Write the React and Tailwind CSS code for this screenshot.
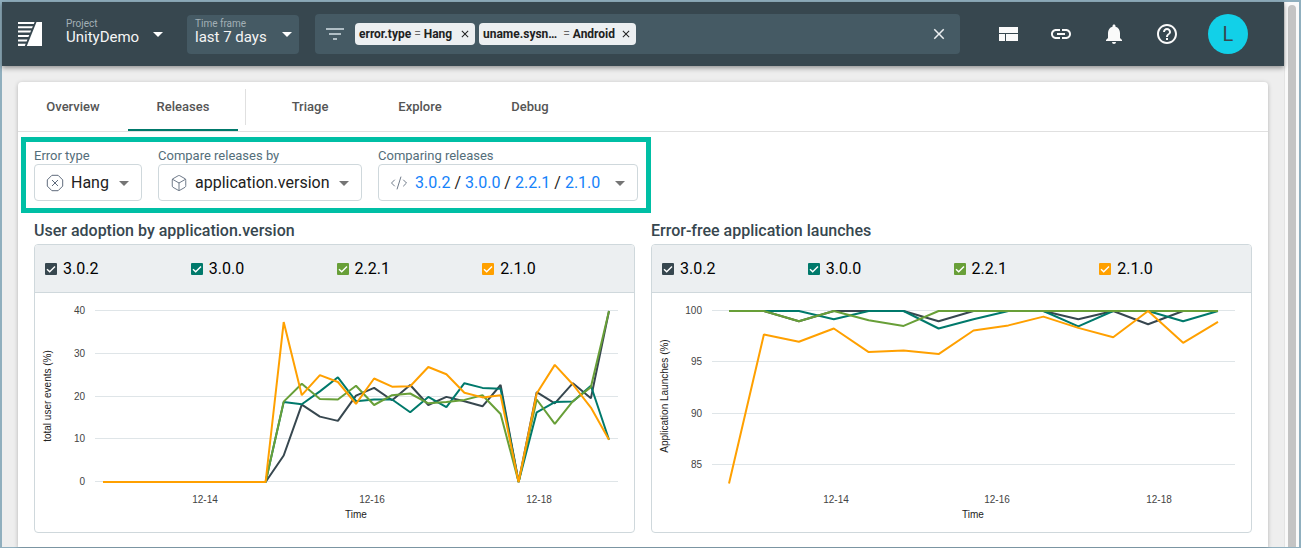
import { Box, CodeXml } from 'lucide-react';
import {
  MdArrowDropDown,
  MdClose,
  MdFilterList,
  MdHelpOutline,
  MdLink,
  MdNotifications,
} from 'react-icons/md';

const RELEASES = [
  { name: '3.0.2', color: '#37474f', box: 'bg-[#37474f]' },
  { name: '3.0.0', color: '#00796b', box: 'bg-[#00796b]' },
  { name: '2.2.1', color: '#689f38', box: 'bg-[#689f38]' },
  { name: '2.1.0', color: '#ffa000', box: 'bg-[#ffa000]' },
];

const QUIET = [0, 0, 0, 0, 0, 0, 0, 0, 0, 0];

const ADOPTION = {
  yTitle: 'total user events (%)',
  axis: [60, 583],
  domain: [0, 40],
  range: [189, 18],
  x: [68, 574],
  ticks: [0, 10, 20, 30, 40],
  dates: [['12-14', 170], ['12-16', 337], ['12-18', 504]],
  series: [
    [...QUIET, 6.2, 18.1, 15.3, 14.3, 20.2, 22, 19.1, 22.7, 18, 19.9, 18.9, 17.7, 22.7, 0, 21, 18.4, 23.1, 19.6, 40],
    [...QUIET, 18.7, 18.2, 21.2, 24.5, 18.9, 19.3, 19.3, 16.3, 19.9, 17.5, 23.1, 22, 21.8, 0, 16.3, 18.7, 18.8, 22.5, 9.9],
    [...QUIET, 18.8, 23, 19.4, 19.3, 22.5, 18, 20.3, 20.7, 18.4, 18.7, 19.2, 20.3, 15.9, 0, 19.3, 13.6, 18.9, 22.2, 40],
    [...QUIET, 37.4, 20.3, 25, 23.4, 18.3, 24.2, 22.3, 22.4, 26.9, 25.2, 20.9, 19.8, 20.3, 0, 20.7, 27.4, 22.8, 17.4, 9.9],
  ],
};

const LAUNCHES = {
  yTitle: 'Application Launches (%)',
  axis: [60, 583],
  domain: [85, 100],
  range: [172, 18],
  x: [77, 566],
  ticks: [85, 90, 95, 100],
  dates: [['12-14', 184], ['12-16', 345], ['12-18', 507]],
  series: [
    [100, 100, 99, 100, 100, 100, 99, 100, 100, 100, 99.2, 100, 98.7, 100, 100],
    [100, 100, 100, 99.2, 100, 100, 98.3, 99.2, 100, 100, 98.5, 100, 100, 99, 100],
    [100, 100, 99, 100, 99.1, 98.55, 100, 100, 100, 100, 100, 100, 100, 100, 100],
    [83.2, 97.7, 97, 98.3, 96, 96.15, 95.8, 98.1, 98.6, 99.45, 98.35, 97.45, 100, 96.9, 98.95],
  ],
};

function LineChart({ chart, label }) {
  const { domain, range, x, axis, ticks, dates, series } = chart;
  const yAt = (v) => range[0] + ((v - domain[0]) / (domain[1] - domain[0])) * (range[1] - range[0]);
  const toPoints = (values) =>
    values
      .map((v, i) => `${(x[0] + (i * (x[1] - x[0])) / (values.length - 1)).toFixed(1)},${yAt(v).toFixed(1)}`)
      .join(' ');
  return (
    <svg
      viewBox="0 0 599 239"
      role="img"
      aria-label={label}
      className="block h-auto w-full font-['Liberation_Sans',Arial,sans-serif] text-[10px]"
    >
      {ticks.map((t) => (
        <g key={t}>
          <line x1={axis[0]} x2={axis[1]} y1={Math.round(yAt(t)) - 0.5} y2={Math.round(yAt(t)) - 0.5} stroke="#dfe5e8" />
          <text x="50" y={Math.round(yAt(t)) + 3} textAnchor="end" fill="#444">{t}</text>
        </g>
      ))}
      {series.map((values, i) => (
        <polyline
          key={RELEASES[i].name}
          points={toPoints(values)}
          fill="none"
          stroke={RELEASES[i].color}
          strokeWidth="2"
          strokeLinejoin="bevel"
        />
      ))}
      {dates.map(([d, cx]) => (
        <text key={d} x={cx} y="210" textAnchor="middle" fill="#444">{d}</text>
      ))}
      <text x="321" y="225" textAnchor="middle" fill="#222">Time</text>
      <text transform="translate(16 103) rotate(-90)" textAnchor="middle" fill="#222">
        {chart.yTitle}
      </text>
    </svg>
  );
}

function ChartPanel({ title, chart, id }) {
  return (
    <section className="min-w-0">
      <h2 className="mb-[3px] text-base leading-5 font-medium text-[#37474f]">{title}</h2>
      <div className="overflow-hidden rounded-sm border border-[#cfd8dc]">
        <div className="grid h-12 grid-cols-4 items-center border-b border-[#cfd8dc] bg-[#eceff1] pr-[6px] pl-[10px]">
          {RELEASES.map((r) => (
            <label key={r.name} htmlFor={`${id}-${r.name}`} className="flex items-center gap-[6px] text-base text-black">
              <span className="grid size-3 [&>*]:col-start-1 [&>*]:row-start-1">
                <input
                  id={`${id}-${r.name}`}
                  type="checkbox"
                  defaultChecked
                  className={`peer size-3 appearance-none rounded-[1px] ${r.box}`}
                />
                <svg viewBox="0 0 12 12" className="pointer-events-none invisible size-3 peer-checked:visible">
                  <path d="M2 6.2 4.7 8.8 10 3.4" fill="none" stroke="#fff" strokeWidth="1.4" />
                </svg>
              </span>
              {r.name}
            </label>
          ))}
        </div>
        <LineChart chart={chart} label={title} />
      </div>
    </section>
  );
}

function HeaderSelect({ id, label, value, box }) {
  return (
    <div className={`grid h-[39px] w-28 [&>*]:col-start-1 [&>*]:row-start-1 ${box}`}>
      <label htmlFor={id} className="px-2 pt-[2px] text-[10px] leading-[13px] text-[#a3b0b6]">{label}</label>
      <select
        id={id}
        className="h-full w-full appearance-none bg-transparent px-2 pt-[6px] text-[15px] leading-4 text-[#f5f5f5] outline-none"
      >
        <option>{value}</option>
      </select>
      <MdArrowDropDown className="pointer-events-none size-6 self-center justify-self-end text-white" />
    </div>
  );
}

function HangIcon({ className }) {
  return (
    <svg viewBox="0 0 18 18" className={className} fill="none" stroke="currentColor">
      <path d="M5.9 1.3H12.1L16.7 5.9V12.1L12.1 16.7H5.9L1.3 12.1V5.9Z" strokeLinejoin="round" />
      <path d="M6 6 12 12M12 6 6 12" />
    </svg>
  );
}

function FieldSelect({ id, label, value, icon: Icon, width }) {
  return (
    <div className={width}>
      <label htmlFor={id} className="block text-[13px] leading-4 text-[#546e7a]">{label}</label>
      <div className="grid h-[37px] items-center rounded-sm border border-[#cfd8dc] [&>*]:col-start-1 [&>*]:row-start-1">
        <Icon className="pointer-events-none ml-[11px] size-[18px] text-[#5f6b7c]" strokeWidth={1.2} />
        <select id={id} className="h-full w-full appearance-none bg-transparent pr-7 pl-9 text-base text-[#212121] outline-none">
          <option>{value}</option>
        </select>
        <MdArrowDropDown className="pointer-events-none mr-[5px] size-6 justify-self-end text-[#757575]" />
      </div>
    </div>
  );
}

function Chip({ field, value, width }) {
  return (
    <span className={`flex h-[22px] items-center justify-between rounded-sm bg-[#eceff1] pr-1 pl-1 text-xs text-[#212121] ${width}`}>
      <span className="whitespace-pre">
        <b>{field}</b> <span className="text-[#666]">=</span> <b>{value}</b>
      </span>
      <button type="button" aria-label={`Remove ${field}`}>
        <MdClose className="size-3" />
      </button>
    </span>
  );
}

function Tab({ children, active }) {
  return (
    <button
      type="button"
      role="tab"
      aria-selected={!!active}
      className={`h-[49px] w-[110px] border-b-2 pt-[2px] text-[13px] font-medium text-[#555] ${active ? 'border-[#00796b]' : 'border-transparent'}`}
    >
      {children}
    </button>
  );
}

export default function App() {
  return (
    <div className="flex min-h-screen border-2 border-b border-[#90afbe] bg-[#eee] font-[Roboto,sans-serif]">
      <div className="flex min-w-0 flex-1 flex-col">
        <header className="relative flex h-16 items-center bg-[#37474f] pr-9 pl-4 shadow-[0_2px_5px_rgba(0,0,0,0.4)]">
          <a href="#home" aria-label="Home" className="mr-4">
            <svg viewBox="0 0 24 24" className="size-6" fill="#fff">
              <path d="M18.5 0H24V24H8.8Z" />
              <path d="M0 0H16.6L15.8 2H0ZM0 4.2H14.9L14 6.2H0ZM0 8.6H13.1L12.2 10.6H0ZM0 13H11.3L10.4 15H0ZM0 17.4H9.5L8.6 19.4H0ZM0 21.8H7.7L6.8 24H0Z" />
            </svg>
          </a>
          <HeaderSelect id="project" label="Project" value="UnityDemo" box="" />
          <div className="w-[17px]" />
          <HeaderSelect id="timeframe" label="Time frame" value="last 7 days" box="rounded-sm bg-[#455a64]" />
          <div className="mr-9 ml-4 flex h-10 min-w-0 flex-1 items-center gap-1 rounded-sm bg-[#455a64] px-2">
            <MdFilterList className="mr-1 size-6 text-[#b0bec5]" />
            <Chip field="error.type" value="Hang" width="w-[120px]" />
            <Chip field="uname.sysn… " value="Android" width="w-[157px]" />
            <button type="button" aria-label="Clear filters" className="mr-1 ml-auto">
              <MdClose className="size-[18px] text-[#eceff1]" />
            </button>
          </div>
          <nav className="flex items-center gap-[29px] text-[#fafafa]">
            <button type="button" aria-label="Dashboards">
              <svg viewBox="0 0 24 24" className="size-6" fill="currentColor">
                <path d="M3 5H22V11H3ZM3 12H9V19H3ZM10 12H22V19H10Z" />
              </svg>
            </button>
            <button type="button" aria-label="Copy link"><MdLink className="size-6" /></button>
            <button type="button" aria-label="Notifications"><MdNotifications className="size-6" /></button>
            <button type="button" aria-label="Help"><MdHelpOutline className="size-6" /></button>
            <button type="button" aria-label="Account" className="size-10 rounded-full bg-[#12d0e8] text-xl text-[#37474f]">
              L
            </button>
          </nav>
        </header>

        <main className="mx-4 mt-4 flex-1 rounded-t-sm bg-white pb-[14px] shadow-[0_1px_4px_rgba(0,0,0,0.25)]">
          <div role="tablist" className="flex border-b border-[#e0e0e0]">
            <Tab>Overview</Tab>
            <Tab active>Releases</Tab>
            <div className="mt-[7px] mr-[9px] ml-[7px] h-9 w-px bg-[#e0e0e0]" />
            <Tab>Triage</Tab>
            <Tab>Explore</Tab>
            <Tab>Debug</Tab>
          </div>

          <div className="mt-[5px] ml-[3px] flex w-fit gap-4 border-[5px] border-[#00bfa5] px-2 pt-[6px] pb-[7px]">
            <FieldSelect id="errortype" label="Error type" value="Hang" icon={HangIcon} width="w-[108px]" />
            <FieldSelect id="compareby" label="Compare releases by" value="application.version" icon={Box} width="w-[204px]" />
            <div className="w-[260px]">
              <label htmlFor="comparing" className="block text-[13px] leading-4 text-[#546e7a]">Comparing releases</label>
              <button
                id="comparing"
                type="button"
                aria-haspopup="listbox"
                className="flex h-[37px] w-full items-center rounded-sm border border-[#cfd8dc] pr-[5px] pl-[11px] text-base text-[#212121]"
              >
                <CodeXml className="mr-[7px] size-[18px] text-[#5f6b7c]" strokeWidth={1.2} />
                <span>
                  {RELEASES.map((r, i) => (
                    <span key={r.name}>
                      {i > 0 && ' / '}
                      <span className="text-[#1482fa]">{r.name}</span>
                    </span>
                  ))}
                </span>
                <MdArrowDropDown className="ml-auto size-6 text-[#757575]" />
              </button>
            </div>
          </div>

          <div className="mx-4 mt-2 grid grid-cols-2 gap-4">
            <ChartPanel id="adoption" title="User adoption by application.version" chart={ADOPTION} />
            <ChartPanel id="launches" title="Error-free application launches" chart={LAUNCHES} />
          </div>
        </main>
      </div>

      <div aria-hidden="true" className="flex w-[15px] justify-center border-l border-[#e4e4e4] bg-[#fafafa] pt-[3px]">
        <div className="w-2 rounded-t-full bg-[#c4c4c4]" />
      </div>
    </div>
  );
}
